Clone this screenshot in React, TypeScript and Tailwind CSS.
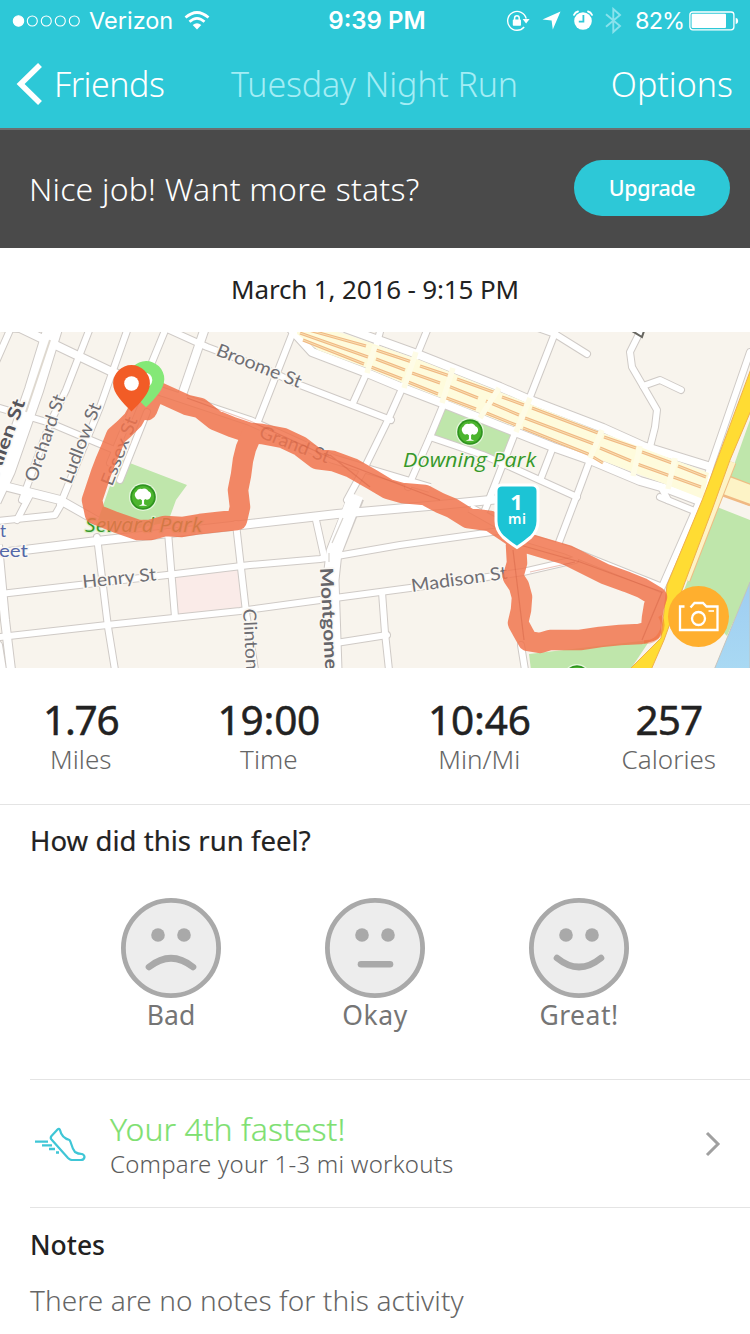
import type { ReactNode } from 'react';

/* ---------- status bar ---------- */

function StatusBar() {
  return (
    <div className="grid h-10 grid-cols-[1fr_auto_1fr] items-center pt-px pl-3 pr-[11px] font-['Inter',sans-serif] text-[24px] leading-none text-white">
      <div className="flex items-center">
        <svg width="70" height="14" viewBox="0 0 70 14" fill="none" stroke="white" strokeWidth="1.1">
          <circle cx="6.5" cy="7" r="5.2" fill="white" />
          <circle cx="20.3" cy="7" r="5" />
          <circle cx="34.3" cy="7" r="5" />
          <circle cx="48.3" cy="7" r="5" />
          <circle cx="62.3" cy="7" r="5" />
        </svg>
        <span className="ml-[7px] w-[85px] text-[23.5px]">Verizon</span>
        <svg className="ml-[10px] mb-0.5" width="26" height="20" viewBox="0 0 26 20" fill="none" stroke="white" strokeWidth="2.7">
          <path d="M1.5 7.6 Q13 -2.6 24.5 7.6" />
          <path d="M5.5 11.8 Q13 5 20.5 11.8" />
          <path d="M13 19.5 L8.7 15 Q13 11.4 17.3 15 Z" fill="white" stroke="none" />
        </svg>
      </div>
      <span className="ml-[3px] text-[24px] font-semibold">9:39 PM</span>
      <div className="flex items-center justify-end">
        <svg width="24" height="22" viewBox="0 0 24 22" fill="none" stroke="white" strokeWidth="1.4">
          <path d="M18.2 17 A9.4 9.4 0 1 1 20.2 8.6" />
          <path d="M16.6 9 H23.6 L20.1 13.4 Z" fill="white" stroke="none" />
          <rect x="6.8" y="9.6" width="8.2" height="6.2" rx="0.8" fill="white" stroke="none" />
          <path d="M8.6 10 V8 a2.3 2.3 0 0 1 4.6 0 V10" strokeWidth="1.5" />
        </svg>
        <svg className="ml-3" width="19" height="19" viewBox="0 0 19 19" fill="white">
          <path d="M18.5 0.5 L10.8 18.5 L9.6 9.4 L0.5 8.4 Z" />
        </svg>
        <svg className="ml-3" width="20" height="21" viewBox="0 0 20 21">
          <circle cx="10" cy="11" r="8.8" fill="white" />
          <path d="M10.4 5 V11.6 H5.8" fill="none" stroke="#2dc8d7" strokeWidth="1.8" />
          <path d="M1 4.8 Q2.2 2 5 1.5 M15 1.5 Q17.8 2 19 4.8" fill="none" stroke="white" strokeWidth="1.8" strokeLinecap="round" />
        </svg>
        <svg className="ml-3" width="17" height="27" viewBox="0 0 17 27" fill="none" stroke="#8ae2ec" strokeWidth="1.9">
          <path d="M1 7.2 L15 19 L8.3 25 V2 L15 8 L1 19.8" />
        </svg>
        <span className="ml-[13px] w-[49px] text-[23.5px] tracking-[-0.9px]">82%</span>
        <svg className="ml-[5px]" width="50" height="20" viewBox="0 0 50 20">
          <rect x="0.9" y="1" width="44" height="17.8" rx="2.8" fill="none" stroke="white" strokeWidth="1.3" />
          <rect x="2.6" y="2.8" width="34.4" height="14.3" rx="1" fill="white" />
          <path d="M46.7 6.8 Q49.2 7.2 49.2 10 T46.7 13.2 Z" fill="white" />
        </svg>
      </div>
    </div>
  );
}

function NavBar() {
  return (
    <div className="grid h-[88px] grid-cols-[1fr_auto_1fr] items-center pl-4 pr-[17px] text-[34px] font-light leading-none text-white">
      <div className="flex items-center">
        <svg width="26" height="44" viewBox="0 0 26 44" fill="none" stroke="white" strokeWidth="5.6">
          <path d="M24 3 L4.6 22 L24 41" />
        </svg>
        <span className="ml-[12px] tracking-[-0.5px]">Friends</span>
      </div>
      <span className="tracking-[-0.15px] text-[#a3edf5]">Tuesday Night Run</span>
      <span className="text-right">Options</span>
    </div>
  );
}

/* ---------- route map ---------- */

const THIN_STREETS = [
  'M10 330 L-4 362', 'M90 328 L66 390 L50 423 L22 500', 'M128 328 L100 407 L60 505',
  'M166 328 L150 367 L110 463', 'M293 332 L257 424', 'M381 328 L375 350 M367 372 L353 403',
  'M428 328 L417 355 L388 420 L365 467 L347 500', 'M447 396 L430 437 L408 487', 'M530 397 L515 433 L490 497',
  'M555 333 L530 397', 'M538 328 L555 334 L587 354', 'M640 332 L630 352 L632 367 L657 410 L655 427 L650 447',
  'M643 386 L660 380 L681 390', 'M553 447 L541 478', 'M590 460 L577 495 L558 545',
  'M430 437 L483 455 L513 468 L577 497', 'M0 408 L30 417 L50 423 L112 449', 'M250 362 L300 385 L391 420',
  'M165 328 L207 347 L252 364', 'M-2 521 L55 515 L62 503', 'M30 495 L17 520',
  'M0 594 L167 575 L250 565 L320 559 L400 545 L520 528', 'M0 637 L107 625 L240 611 L320 600 L410 588 L523 572 L575 560',
  'M97 537 L108 627 L115 670', 'M168 532 L175 617', 'M236 524 L246 612 L255 670', 'M316 520 L324 556',
  'M382 592 L385 633 L389 670', 'M336 643 L387 635', 'M521 645 L525 670', 'M485 510 L493 490', 'M661 487 L668 500',
  'M750 352 L711 465 L700 500 L661 589', 'M660 497 L692 510', 'M-1 645 L3 670', 'M147 412 L120 480',
];

const WIDE_STREETS = [
  'M0 327 L20 328 L70 352 L110 371 L163 392 L250 421 L333 459 L430 488',
  'M0 485 L60 500 L97 521', 'M0 553 L97 541 L250 524 L337 514 L440 505 L500 499', 'M-2 545 L5 620 L11 670',
  'M205 328 L182 395', 'M345 328 L417 354 L500 387 L530 400 L603 428 L643 446 L711 467',
  'M290 328 L312 352 L367 373 L403 388 L442 403 L553 447 L590 460 L640 481 L668 489 L705 503',
  'M470 508 L520 536 L567 550 L662 588',
];

const LANES = [
  'M305 329 L366 346 M373 349 L412 362 M420 366 L450 376 M457 379 L496 393 M502 397 L524 405 M532 408 L598 433 M604 437 L636 448 M642 452 L672 463 M678 466 L706 477',
  'M300 333 L368 357 M376 359 L405 370 M412 373 L440 383 M448 386 L478 398 M486 401 L519 415 M525 418 L594 444 M600 448 L631 461 M637 464 L701 487',
  'M303 340 L364 364 M371 367 L402 379 M408 382 L438 394 M444 397 L476 409 M484 412 L516 425 M523 428 L588 454 L603 463',
];

const CROSSINGS = 'M375 346 L367 373 M416 352 L404 388 M453 368 L442 403 M499 388 L480 418 M530 398 L516 432 M602 430 L590 458 M640 446 L633 476 M675 458 L668 489';

const ROUTE =
  'M147 410 L151 400 L154 390 L165 395 L176 400 L187 405 L200 408 L215 420 L232 427 L250 433 L262 434 L283 438 L300 446 L317 459 L333 461 L352 468 L373 480 L388 489 L402 493 L425 495 L440 503 L452 508 L468 518 L490 521 L505 531 L520 541 L540 547 L567 555 L585 564 L605 574 L627 582 L642 588 L657 597 L654 606 L652 618 L651 631 L640 634 L620 635 L600 637 L580 640 L550 640 L540 643 L528 641 L524 634 L518 623 L521 610 L522 597 L519 586 L513 577 L517 563 L516 545';
const ROUTE_BRANCH =
  'M252 434 L246 448 L243 460 L241 475 L238 490 L240 507 L237 520 L218 522 L200 524 L182 527 L165 526 L150 530 L138 530 L115 522 L95 514 L92 500 L96 488 L101 473 L106 460 L112 446 L116 436 L124 429 L133 420 L138 411';

function StreetLabel({ x, y, a = 0, len, size = 18, color = '#6f6e73', weight = 400, children }: {
  x: number; y: number; a?: number; len?: number; size?: number; color?: string; weight?: number; children: string;
}) {
  return (
    <text
      transform={`translate(${x} ${y}) rotate(${a})`}
      fontSize={size} fontWeight={weight}
      fill={color} stroke="#faf7f2" strokeWidth="3" strokeLinejoin="round" paintOrder="stroke"
      textLength={len} lengthAdjust="spacingAndGlyphs"
    >
      {children}
    </text>
  );
}

function ParkLabel({ x, y, len, halo, children }: { x: number; y: number; len: number; halo: string; children: string }) {
  return (
    <text
      x={x} y={y} fontFamily="'Open Sans', 'Noto Sans', sans-serif" fontSize="20.5" fontStyle="italic" fontWeight="500"
      fill="#36982a" stroke={halo} strokeWidth="2.5" strokeLinejoin="round" paintOrder="stroke"
      textLength={len} lengthAdjust="spacingAndGlyphs"
    >
      {children}
    </text>
  );
}

function ParkBadge({ x, y }: { x: number; y: number }) {
  return (
    <g transform={`translate(${x} ${y})`}>
      <circle r="14" fill="#e6f6dc" />
      <circle r="12.8" fill="#2f9420" />
      <circle r="11" fill="#4cb52e" />
      <path transform="scale(1.08)" d="M-7 0 a3.5 3.5 0 0 1 1-5 a4 4 0 0 1 5-2.4 a4.5 4.5 0 0 1 6 2 a3.7 3.7 0 0 1 1.6 6 a3 3 0 0 1-4.6 1.2 L1 3 V6.6 L4 8 H-4 L-1 6.6 V3 L-2.6 1.8 A3 3 0 0 1-7 0 Z" fill="white" />
    </g>
  );
}

function RouteMap() {
  return (
    <svg className="block" width="750" height="336" viewBox="0 332 750 336" fontFamily="Lato, 'Noto Sans', sans-serif">
      <defs>
        <linearGradient id="water" x1="0" y1="0" x2="0" y2="1">
          <stop offset="0" stopColor="#9fcdf2" />
          <stop offset="1" stopColor="#a9d9f3" />
        </linearGradient>
      </defs>
      <rect y="332" width="750" height="336" fill="#f8f4ed" />
      <path d="M174 576 L237 568 L244 609 L178 616 Z" fill="#faebe8" />
      <path d="M122 460 L187 485 L176 500 L168 522 L130 530 L98 520 L112 480 Z" fill="#bfe6ab" />
      <path d="M440 403 L515 433 L503 458 L483 453 L432 436 Z" fill="#bfe6ab" />
      <path d="M529 654 L650 640 L630 670 L531 670 Z" fill="#bfe6ab" />
      <path d="M717 507 L750 520 V585 L727 636 L684 590 Z" fill="#bfe6ab" />
      <path d="M750 420 L729 479 L750 487 Z" fill="#bfe6ab" />
      <path d="M750 582 L714 670 H750 Z" fill="url(#water)" stroke="#c5c3bd" strokeWidth="1" />

      <g fill="none" strokeLinejoin="round">
        <g stroke="#cfcac6">
          <path d="M53 328 L34 390 L6 470 L-8 500" strokeWidth="20" />
          <path d="M356 497 L334 552 L331 580 L334 670" strokeWidth="17" />
          {THIN_STREETS.map((d) => <path key={d} d={d} strokeWidth="8" strokeLinecap="round" />)}
          {WIDE_STREETS.map((d) => <path key={d} d={d} strokeWidth="10" />)}
        </g>
        <g stroke="white">
          <path d="M53 328 L34 390 L6 470 L-8 500" strokeWidth="18" />
          <path d="M356 495 L334 552 L331 580 L334 670" strokeWidth="15" />
          {THIN_STREETS.map((d) => <path key={d} d={d} strokeWidth="6" strokeLinecap="round" />)}
          {WIDE_STREETS.map((d) => <path key={d} d={d} strokeWidth="8" />)}
        </g>
        <path d="M50 340 L26 412" stroke="#ded8cf" strokeWidth="2" />
        <path d="M343 518 L332 543 M329 553 V562" stroke="#d8d4cf" strokeWidth="1.2" />
        <path d="M297 322 L345 334 L417 359 L500 392 L603 433 L709 473 L703 499 L670 486 L590 456 L500 421 L403 383 L367 368 L318 350 L297 334 Z" fill="#fefbdc" />
        {LANES.map((d) => <path key={d} d={d} stroke="#f0b983" strokeWidth="3" />)}
        {LANES.map((d) => <path key={d} d={d} stroke="#f9dfb4" strokeWidth="1" />)}
        <path d={CROSSINGS} stroke="#fefce6" strokeWidth="5.5" />
        <path d="M720 483 L756 497" stroke="#eebd84" strokeWidth="21" />
        <path d="M718 483 L756 497" stroke="#fdf3c6" strokeWidth="19" />
        <path d="M722 495 L750 505" stroke="#f0b983" strokeWidth="2.5" />
        <path d="M732 462 L712 513 L686 580" stroke="#eebd84" strokeWidth="9" />
        <path d="M732 462 L712 513 L686 580" stroke="#fdf3c6" strokeWidth="7" />
      </g>
      <path d="M752 366 L703 498 L667 585 L661 638 L629 670 H651 L664 640 L685 582 L712 510 L730 460 L752 408 Z" fill="#ffdc33" stroke="#f0b04a" strokeWidth="1" />
      <path d="M632 331 L642 337 L644 331" fill="none" stroke="#66655f" strokeWidth="2" />

      <StreetLabel x={215} y={355} a={21.5} len={90}>Broome St</StreetLabel>
      <StreetLabel x={258} y={437} a={21} len={74}>Grand St</StreetLabel>
      <StreetLabel x={36} y={483} a={-71} len={91}>Orchard St</StreetLabel>
      <StreetLabel x={71} y={485} a={-69} len={85}>Ludlow St</StreetLabel>
      <StreetLabel x={112} y={487} a={-69} len={72}>Essex St</StreetLabel>
      <StreetLabel x={-2} y={477} a={-70} len={80} weight={700} color="#55545a">Allen St</StreetLabel>
      <StreetLabel x={83} y={588} a={-6} len={74}>Henry St</StreetLabel>
      <StreetLabel x={412} y={592} a={-8} len={97}>Madison St</StreetLabel>
      <StreetLabel x={320} y={568} a={87} len={102} weight={700} color="#66656a">Montgome</StreetLabel>
      <StreetLabel x={243} y={609} a={87} len={61}>Clinton</StreetLabel>
      <StreetLabel x={0} y={537} size={17} color="#5468a8">t</StreetLabel>
      <StreetLabel x={-1} y={557} size={17} len={29} color="#5468a8">eet</StreetLabel>
      <ParkLabel x={403} y={467} len={133} halo="#f6f6ea">Downing Park</ParkLabel>
      <ParkLabel x={85} y={532} len={117} halo="#dcefcd">Seward Park</ParkLabel>
      <ParkBadge x={470} y={432} />
      <ParkBadge x={143} y={497} />
      <ParkBadge x={577} y={678} />

      <g opacity="0.84" fill="none" stroke="#f1734c" strokeWidth="20.5" strokeLinejoin="round" strokeLinecap="round">
        <path d={ROUTE} />
        <path d={ROUTE_BRANCH} />
      </g>
      <g opacity="0.35" fill="none" stroke="#c9563a" strokeWidth="1.2">
        <path d="M187 398 L250 421 L333 459 L440 500 M330 455 L370 487 M520 545 L580 562 L662 592 L642 640 M513 550 L524 640 M575 562 L530 572" />
      </g>
      <path d="M644 642 A17 17 0 0 0 660 616" fill="none" stroke="#f0672f" strokeWidth="4" opacity="0.4" />

      <path d="M146 361 a18.3 18.3 0 0 1 18.3 18.3 c0 10 -10 20 -18.3 28 c-8 -8 -18 -18 -18 -28 A18.3 18.3 0 0 1 146 361 Z" fill="#84e877" />
      <circle cx="145" cy="380" r="7.3" fill="white" />
      <path d="M131.5 365 a18.4 18.4 0 0 1 18.4 18.4 c0 10 -10 19.5 -18.4 28 c-8.4 -8.5 -18.4 -18 -18.4 -28 A18.4 18.4 0 0 1 131.5 365 Z" fill="#f25c26" />
      <circle cx="131.5" cy="383.5" r="7.3" fill="white" />

      <path d="M502 485 H532 Q538 485 538 491 V521 Q538 530 531 537 Q524 543 517 547.5 Q510 543 503 537 Q496 530 496 521 V491 Q496 485 502 485 Z" fill="#1cc4d5" stroke="white" strokeWidth="3" />
      <g fill="white" textAnchor="middle" fontFamily="'Noto Sans', sans-serif">
        <text x="516.5" y="510" fontSize="22" fontWeight="700">1</text>
        <text x="517" y="523.5" fontSize="14" fontWeight="600" textLength="18">mi</text>
      </g>

      <circle cx="698.5" cy="616.5" r="30.5" fill="#ffaf2e" />
      <g fill="none" stroke="white" strokeWidth="2.3">
        <path d="M684.5 606.5 H680 V630 H717.5 V606.5 H706.5 L703 603 H694.5 L690.5 607.5" />
        <circle cx="698.5" cy="618.5" r="6.5" />
        <path d="M708.5 611 H714" strokeWidth="1.6" />
      </g>
    </svg>
  );
}

/* ---------- content ---------- */

function Stat({ value, label, spacing }: { value: string; label: string; spacing: string }) {
  return (
    <div className="flex flex-col items-center">
      <span className={`text-[40.5px] leading-[40px] text-[#222] [-webkit-text-stroke:0.5px_#222] ${spacing}`}>{value}</span>
      <span className="mt-0.5 text-[26px] font-light leading-[34px] text-[#666]">{label}</span>
    </div>
  );
}

function Mood({ label, spacing, children }: { label: string; spacing: string; children: ReactNode }) {
  return (
    <button type="button" className="flex w-[204px] flex-col items-center">
      <svg width="100" height="100" viewBox="0 0 100 100" fill="none" stroke="#a9a9a9" strokeLinecap="round">
        <circle cx="50" cy="50" r="47.6" fill="#ededed" strokeWidth="4.8" />
        <circle cx="37" cy="37" r="6.8" fill="#a9a9a9" stroke="none" />
        <circle cx="63" cy="37" r="6.8" fill="#a9a9a9" stroke="none" />
        <g strokeWidth="6.6">{children}</g>
      </svg>
      <span className={`text-[26.5px] leading-[34px] text-[#757575] ${spacing}`}>{label}</span>
    </button>
  );
}

export default function App() {
  return (
    <div className="flex h-[1334px] w-[750px] flex-col overflow-hidden bg-white font-['Noto_Sans',sans-serif]">
      <header className="h-[128px] bg-[#2dc8d7]">
        <StatusBar />
        <NavBar />
      </header>

      <section className="flex h-[120px] items-center justify-between border-t-2 border-[#6b6f70] bg-[#4a4a4a] pb-0.5 pl-[29px] pr-5">
        <span className="pt-0.5 text-[32px] font-light tracking-[0.2px] text-white">Nice job! Want more stats?</span>
        <button type="button" className="h-14 w-[156px] rounded-full bg-[#2dc8d7] text-[21.5px] font-medium tracking-[-0.4px] text-white">
          Upgrade
        </button>
      </section>

      <div className="flex h-[84px] items-center justify-center pb-[2px] text-[26px] tracking-[-0.15px] text-[#222]">
        March 1, 2016 - 9:15 PM
      </div>

      <RouteMap />

      <section className="flex h-[137px] border-b border-[#e4e4e4] pl-[43px] pr-[34px] pt-8">
        <Stat value="1.76" label="Miles" spacing="tracking-[-1.2px]" />
        <div className="ml-[99px]"><Stat value="19:00" label="Time" spacing="tracking-[-0.2px]" /></div>
        <div className="ml-[108px]"><Stat value="10:46" label="Min/Mi" spacing="tracking-[-0.2px]" /></div>
        <div className="ml-auto"><Stat value="257" label="Calories" spacing="tracking-[-0.9px]" /></div>
      </section>

      <section className="flex h-[274px] flex-col">
        <h2 className="pl-[30px] pt-[17px] text-[27.5px] leading-[38px] tracking-[0.05px] text-[#222] [-webkit-text-stroke:0.2px_#222]">How did this run feel?</h2>
        <div className="mt-[38px] flex justify-center">
          <Mood label="Bad" spacing="tracking-[0px]"><path d="M28 69 Q50 51.5 72 69" /></Mood>
          <Mood label="Okay" spacing="tracking-[0.6px]"><path d="M36 66.3 H65" /></Mood>
          <Mood label="Great!" spacing="tracking-[0.5px]"><path d="M28 60 Q50 78 72 60" /></Mood>
        </div>
      </section>

      <section className="ml-[30px] flex h-[129px] items-center border-y border-[#e4e4e4] pr-[29px]">
        <svg className="ml-[5px]" width="51" height="34" viewBox="0 0 51 34" fill="none" stroke="#3fc6d6" strokeWidth="2.2" strokeLinejoin="round">
          <path d="M22.5 2.5 Q24 1 25 3 C26 8 29 11.5 34.5 13 C36.5 15 36 20 40 25 Q43 27 47 27 Q49.5 28 49.5 30 Q49 33 46 33 H37 Q35 33 33 31 L16.5 12.5 Q15 11 16.5 9 Z" />
          <path d="M0 14.7 H13 M7 18.3 H17 M14 22 H20 M21 25.5 H24" strokeWidth="2.3" />
        </svg>
        <div className="ml-6 flex flex-col pt-[4px]">
          <span className="text-[32px] font-light leading-[36px] text-[#7ee071] [-webkit-text-stroke:0.2px_#7ee071]">Your 4th fastest!</span>
          <span className="text-[24px] font-light leading-[34px] tracking-[0.22px] text-[#5c5c5c]">Compare your 1-3 mi workouts</span>
        </div>
        <svg className="ml-auto" width="16" height="26" viewBox="0 0 16 26" fill="none" stroke="#a0a0a0" strokeWidth="3">
          <path d="M2 2 L13 13 L2 24" />
        </svg>
      </section>

      <section className="flex flex-col pl-[30px] pt-[18px]">
        <h2 className="text-[26.5px] font-medium leading-[38px] text-[#222]">Notes</h2>
        <p className="mt-[17px] text-[28px] font-light leading-[38px] tracking-[0.08px] text-[#666]">
          There are no notes for this activity
        </p>
      </section>
    </div>
  );
}
